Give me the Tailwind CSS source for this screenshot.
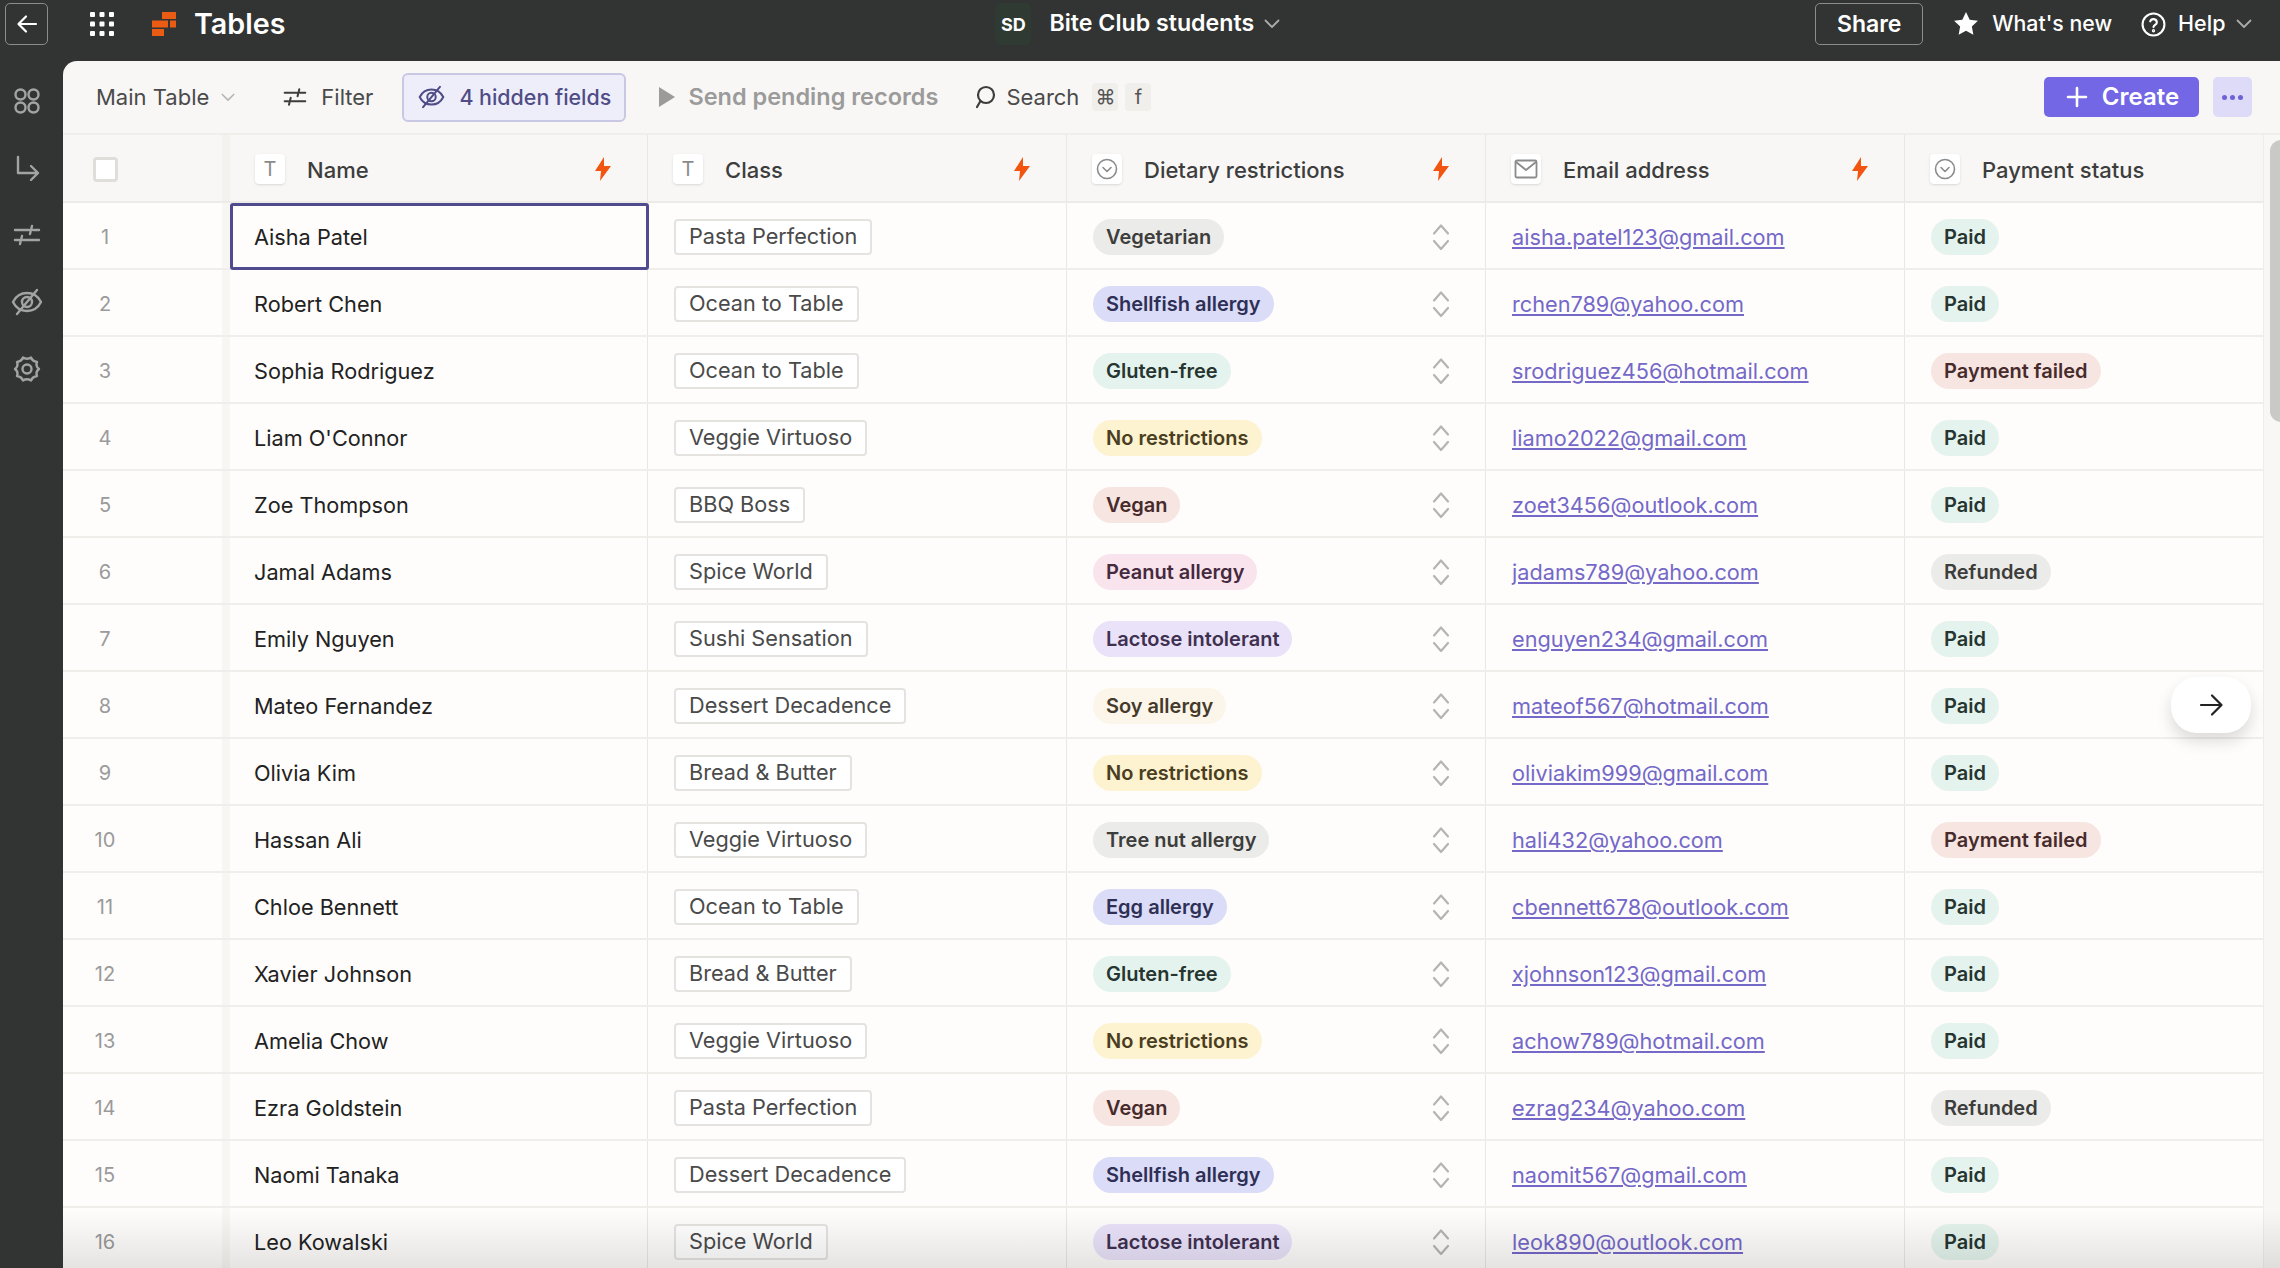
<!DOCTYPE html>
<html lang="en">
  <head>
    <meta charset="UTF-8" />
    <title>Tables</title>
    <script src="https://cdn.jsdelivr.net/npm/@tailwindcss/browser@4"></script>
  </head>
  <body class="h-screen overflow-hidden bg-[#323433] font-['Inter',sans-serif]">
    <!-- top bar -->
    <header class="flex h-[61px] items-center pb-[13px] text-white">
      <button class="ml-[5px] flex h-[42px] w-[43px] items-center justify-center rounded-[5px] border border-[#8c8c8c]">
        <svg width="24" height="24" viewBox="0 0 24 24" fill="none" stroke="currentColor" stroke-width="2.2" stroke-linecap="round" stroke-linejoin="round"><path d="M21 12H4M11 4.500 3.500 12l7.500 7.500"/></svg>
      </button>
      <svg class="ml-[42px]" width="24" height="24" viewBox="0 0 24 24" fill="#fff"><rect x="0" y="0" width="5" height="5" rx="1"/><rect x="9.500" y="0" width="5" height="5" rx="1"/><rect x="19" y="0" width="5" height="5" rx="1"/><rect x="0" y="9.500" width="5" height="5" rx="1"/><rect x="9.500" y="9.500" width="5" height="5" rx="1"/><rect x="19" y="9.500" width="5" height="5" rx="1"/><rect x="0" y="19" width="5" height="5" rx="1"/><rect x="9.500" y="19" width="5" height="5" rx="1"/><rect x="19" y="19" width="5" height="5" rx="1"/></svg>
      <svg class="ml-[38px]" width="24" height="24" viewBox="0 0 24 24" fill="#ea5b14"><path d="M10 0h14v7H10zM0 8.500h16v7H0zM18 8.500h6v7h-6zM0 17h12v7H0z"/></svg>
      <span class="ml-[18px] text-[28.7px] font-semibold leading-none">Tables</span>
      <span class="ml-[710px] flex h-[42px] w-[36px] items-center justify-center rounded-[5px] bg-[#2e3a32] text-[18px] font-bold">SD</span>
      <span class="ml-[18px] text-[23.2px] font-semibold leading-none">Bite Club students</span>
      <svg class="ml-[10px] text-[#aaa]" width="16" height="10" viewBox="0 0 16 10" fill="none" stroke="currentColor" stroke-width="1.800" stroke-linecap="round" stroke-linejoin="round"><path d="M1.500 1.500 8 8l6.500-6.500"/></svg>
      <button class="ml-[535px] flex h-[42px] w-[108px] items-center justify-center rounded-[5px] border border-[#8c8c8c] text-[23px] font-semibold">Share</button>
      <svg class="ml-[30px]" width="26" height="26" viewBox="0 0 24 24" fill="#fff"><path d="m12 1 3.400 7 7.600 1-5.600 5.300L18.800 22 12 18.300 5.200 22l1.400-7.700L1 9l7.600-1z"/></svg>
      <span class="ml-[13px] text-[21.3px] font-medium leading-none">What's new</span>
      <svg class="ml-[29px]" width="25" height="25" viewBox="0 0 24 24" fill="none" stroke="currentColor" stroke-width="2" stroke-linecap="round" stroke-linejoin="round"><circle cx="12" cy="12" r="10.500"/><path d="M8.800 9a3.300 3.300 0 0 1 6.400 1c0 2.200-3.200 2.600-3.200 4.500"/><circle cx="12" cy="18" r=".6"/></svg>
      <span class="ml-[12px] text-[21.5px] font-medium leading-none">Help</span>
      <svg class="ml-[11px] text-[#aaa]" width="16" height="10" viewBox="0 0 16 10" fill="none" stroke="currentColor" stroke-width="1.800" stroke-linecap="round" stroke-linejoin="round"><path d="M1.500 1.500 8 8l6.500-6.500"/></svg>
    </header>

    <div class="flex h-[1207px]">
      <!-- left rail -->
      <aside class="flex w-[63px] shrink-0 flex-col items-center gap-[39px] pt-[26px] pr-[9px] text-[#a3a3a3]">
        <svg width="28" height="28" viewBox="0 0 28 28" fill="none" stroke="currentColor" stroke-width="2.400"><circle cx="7.500" cy="7.500" r="5"/><circle cx="20.500" cy="7.500" r="5"/><circle cx="7.500" cy="20.500" r="5"/><circle cx="20.500" cy="20.500" r="5"/></svg>
        <svg width="28" height="28" viewBox="0 0 28 28" fill="none" stroke="currentColor" stroke-width="2.400" stroke-linecap="round" stroke-linejoin="round"><path d="M5 3v16h20M18 12l7 7-7 7"/></svg>
        <svg width="28" height="28" viewBox="0 0 28 28" fill="none" stroke="currentColor" stroke-width="2.400" stroke-linecap="round"><path d="M2 9h14M20 9h6M19 5l-2 8M2 19h4M10 19h16M9 15l-2 8"/></svg>
        <svg width="32" height="28" viewBox="0 0 32 28" fill="none" stroke="currentColor" stroke-width="2.400" stroke-linecap="round" stroke-linejoin="round"><path d="M2 14c3-6 8-9 14-9s11 3 14 9c-3 6-8 9-14 9S5 20 2 14z"/><circle cx="16" cy="14" r="5"/><path d="M26 2 6 26"/></svg>
        <svg width="30" height="28" viewBox="0 0 30 28" fill="none" stroke="currentColor" stroke-width="2.400" stroke-linejoin="round"><circle cx="15" cy="14" r="4.500"/><path d="M11 2.500c2.500 1.500 5.500 1.500 8 0 1 2.600 3.400 4 6 4.500-1 2.500-.6 5 2 7-2.600 2-3 4.500-2 7-2.600.5-5 1.900-6 4.500-2.500-1.500-5.500-1.500-8 0-1-2.600-3.400-4-6-4.500 1-2.500.6-5-2-7 2.600-2 3-4.500 2-7 2.600-.5 5-1.900 6-4.500z"/></svg>
      </aside>

      <main class="relative min-w-0 flex-1 overflow-hidden rounded-tl-[14px] bg-[#f8f7f5]">
        <!-- toolbar -->
        <div class="flex h-[74px] items-center border-b-2 border-[#efeeeb] text-[22px] text-[#4a4a4a]">
          <span class="ml-[33px]">Main Table</span>
          <svg class="ml-[12px] text-[#b5b5b5]" width="14" height="9" viewBox="0 0 16 10" fill="none" stroke="currentColor" stroke-width="1.800" stroke-linecap="round" stroke-linejoin="round"><path d="M1.500 1.500 8 8l6.500-6.500"/></svg>
          <svg class="ml-[48px]" width="24" height="24" viewBox="0 0 28 28" fill="none" stroke="#3d3d3d" stroke-width="2.400" stroke-linecap="round"><path d="M2 9h14M20 9h6M19 5l-2 8M2 19h4M10 19h16M9 15l-2 8"/></svg>
          <span class="ml-[14px]">Filter</span>
          <button class="ml-[29px] flex h-[49px] w-[224px] items-center rounded-[6px] border-2 border-[#c9c8e4] bg-[#eeeefb] text-[#4f4c86]">
            <svg class="ml-[14px]" width="27" height="24" viewBox="0 0 32 28" fill="none" stroke="currentColor" stroke-width="2.400" stroke-linecap="round" stroke-linejoin="round"><path d="M2 14c3-6 8-9 14-9s11 3 14 9c-3 6-8 9-14 9S5 20 2 14z"/><circle cx="16" cy="14" r="5"/><path d="M26 2 6 26"/></svg>
            <span class="ml-[14px] text-[21.4px] font-medium">4 hidden fields</span>
          </button>
          <svg class="ml-[32px]" width="18" height="22" viewBox="0 0 18 22" fill="#9b9b9b"><path d="M1 1 17 11 1 21z"/></svg>
          <span class="ml-[12px] text-[23.5px] font-semibold text-[#9b9b9b]">Send pending records</span>
          <svg class="ml-[36px]" width="22" height="24" viewBox="0 0 22 24" fill="none" stroke="#3d3d3d" stroke-width="2.200" stroke-linecap="round"><circle cx="12" cy="10" r="8"/><path d="M6.500 16 3 22"/></svg>
          <span class="ml-[10px]">Search</span>
          <span class="ml-[13px] flex h-[28px] w-[26px] items-center justify-center rounded-[4px] bg-[#f0efec] text-[20px] text-[#555]">⌘</span>
          <span class="ml-[7px] flex h-[28px] w-[26px] items-center justify-center rounded-[4px] bg-[#f0efec] text-[20px] text-[#555]">f</span>
          <button class="ml-auto flex h-[40px] w-[155px] items-center justify-center gap-[14px] rounded-[5px] bg-[#7467e6] pl-[2px] text-[24px] font-semibold text-white">
            <svg width="22" height="22" viewBox="0 0 22 22" fill="none" stroke="currentColor" stroke-width="2.600" stroke-linecap="round"><path d="M11 2v18M2 11h18"/></svg>
            Create
          </button>
          <button class="mr-[28px] ml-[14px] flex h-[40px] w-[39px] items-center justify-center gap-[3px] rounded-[5px] bg-[#dedbf8]">
            <i class="size-[5px] rounded-full bg-[#6d62d6]"></i><i class="size-[5px] rounded-full bg-[#6d62d6]"></i><i class="size-[5px] rounded-full bg-[#6d62d6]"></i>
          </button>
        </div>

        <div class="flex">
          <div class="w-[2200px] shrink-0">
            <!-- header row -->
            <div class="grid h-[68px] grid-cols-[167px_418px_419px_419px_419px_358px] border-b-2 border-[#ecebe8] text-[22px] text-[#3d3d3d]">
              <div class="flex items-center border-r-8 border-[#f3f2ef] pt-[2px]">
                <span class="ml-[30px] size-[25px] rounded-[4px] border-[3px] border-[#dfdedb] bg-white"></span>
              </div>
              <div class="flex items-center border-r border-[#e8e7e4] pt-[2px]">
                <span class="ml-[25px] flex h-[30px] w-[30px] items-center justify-center rounded-[4px] bg-white text-[20px] text-[#8b8b8b] shadow-sm">T</span>
                <span class="mt-[2px] ml-[22px] font-medium">Name</span>
                <svg class="mr-[35px] ml-auto" width="18" height="24" viewBox="0 0 18 24" fill="#f1550f"><path d="M10 0 1 14h6l-1 10 11-15h-7z"/></svg>
              </div>
              <div class="flex items-center border-r border-[#e8e7e4] pt-[2px]">
                <span class="ml-[25px] flex h-[30px] w-[30px] items-center justify-center rounded-[4px] bg-white text-[20px] text-[#8b8b8b] shadow-sm">T</span>
                <span class="mt-[2px] ml-[22px] font-medium">Class</span>
                <svg class="mr-[35px] ml-auto" width="18" height="24" viewBox="0 0 18 24" fill="#f1550f"><path d="M10 0 1 14h6l-1 10 11-15h-7z"/></svg>
              </div>
              <div class="flex items-center border-r border-[#e8e7e4] pt-[2px]">
                <span class="ml-[25px] flex h-[30px] w-[30px] items-center justify-center rounded-[4px] bg-white shadow-sm">
                  <svg width="22" height="22" viewBox="0 0 22 22" fill="none" stroke="#8b8b8b" stroke-width="1.600" stroke-linecap="round" stroke-linejoin="round"><circle cx="11" cy="11" r="9.500"/><path d="m7 9.500 4 4 4-4"/></svg>
                </span>
                <span class="mt-[2px] ml-[22px] font-medium">Dietary restrictions</span>
                <svg class="mr-[35px] ml-auto" width="18" height="24" viewBox="0 0 18 24" fill="#f1550f"><path d="M10 0 1 14h6l-1 10 11-15h-7z"/></svg>
              </div>
              <div class="flex items-center border-r border-[#e8e7e4] pt-[2px]">
                <span class="ml-[25px] flex h-[30px] w-[30px] items-center justify-center rounded-[4px] bg-white shadow-sm">
                  <svg width="24" height="20" viewBox="0 0 24 20" fill="none" stroke="#8b8b8b" stroke-width="1.800" stroke-linejoin="round"><rect x="1.500" y="1.500" width="21" height="17" rx="1.500"/><path d="m2 3 10 8 10-8"/></svg>
                </span>
                <span class="mt-[2px] ml-[22px] font-medium">Email address</span>
                <svg class="mr-[35px] ml-auto" width="18" height="24" viewBox="0 0 18 24" fill="#f1550f"><path d="M10 0 1 14h6l-1 10 11-15h-7z"/></svg>
              </div>
              <div class="flex items-center pt-[2px]">
                <span class="ml-[25px] flex h-[30px] w-[30px] items-center justify-center rounded-[4px] bg-white shadow-sm">
                  <svg width="22" height="22" viewBox="0 0 22 22" fill="none" stroke="#8b8b8b" stroke-width="1.600" stroke-linecap="round" stroke-linejoin="round"><circle cx="11" cy="11" r="9.500"/><path d="m7 9.500 4 4 4-4"/></svg>
                </span>
                <span class="mt-[2px] ml-[22px] font-medium">Payment status</span>
              </div>
            </div>
            <div id="rows"></div>
          </div>
          <!-- scrollbar -->
          <div class="h-[1133px] flex-1 border-l border-[#eeedea] bg-[#f8f7f5] pt-[5px] pl-[6px]">
            <div class="h-[282px] w-[11px] rounded-l-full bg-[#c9c9c7]"></div>
          </div>
        </div>

        <!-- scroll-right button -->
        <button class="absolute top-[616px] left-[2108px] flex h-[56px] w-[80px] items-center justify-center rounded-[26px] bg-white shadow-[0_8px_16px_rgba(0,0,0,0.14)]">
          <svg width="26" height="26" viewBox="0 0 26 26" fill="none" stroke="#222" stroke-width="2.200" stroke-linecap="round" stroke-linejoin="round"><path d="M3 13h20M14 3.500 23.500 13 14 22.500"/></svg>
        </button>
        <!-- fade at the bottom of the table -->
        <div class="pointer-events-none absolute right-0 bottom-0 left-0 h-[58px] bg-linear-to-t from-black/10 to-transparent"></div>
      </main>
    </div>

    <script>
      const tags = {
        gray: "bg-[#ebebe9] text-[#3d3d3b]",
        blue: "bg-[#dadcf8] text-[#2f2f55]",
        green: "bg-[#e4f3ed] text-[#26352f]",
        yellow: "bg-[#fdf3d0] text-[#4a3d20]",
        red: "bg-[#f7e5e2] text-[#472b2b]",
        pink: "bg-[#f9e4ee] text-[#45293d]",
        purple: "bg-[#e9e2f9] text-[#3f3050]",
        tan: "bg-[#fcf5ea] text-[#453a2a]",
      };
      const diet = {
        Vegetarian: "gray",
        "Shellfish allergy": "blue",
        "Gluten-free": "green",
        "No restrictions": "yellow",
        Vegan: "red",
        "Peanut allergy": "pink",
        "Lactose intolerant": "purple",
        "Soy allergy": "tan",
        "Tree nut allergy": "gray",
        "Egg allergy": "blue",
      };
      const status = { Paid: "green", "Payment failed": "red", Refunded: "gray" };
      const data = [
        ["Aisha Patel", "Pasta Perfection", "Vegetarian", "aisha.patel123@gmail.com", "Paid"],
        ["Robert Chen", "Ocean to Table", "Shellfish allergy", "rchen789@yahoo.com", "Paid"],
        ["Sophia Rodriguez", "Ocean to Table", "Gluten-free", "srodriguez456@hotmail.com", "Payment failed"],
        ["Liam O'Connor", "Veggie Virtuoso", "No restrictions", "liamo2022@gmail.com", "Paid"],
        ["Zoe Thompson", "BBQ Boss", "Vegan", "zoet3456@outlook.com", "Paid"],
        ["Jamal Adams", "Spice World", "Peanut allergy", "jadams789@yahoo.com", "Refunded"],
        ["Emily Nguyen", "Sushi Sensation", "Lactose intolerant", "enguyen234@gmail.com", "Paid"],
        ["Mateo Fernandez", "Dessert Decadence", "Soy allergy", "mateof567@hotmail.com", "Paid"],
        ["Olivia Kim", "Bread & Butter", "No restrictions", "oliviakim999@gmail.com", "Paid"],
        ["Hassan Ali", "Veggie Virtuoso", "Tree nut allergy", "hali432@yahoo.com", "Payment failed"],
        ["Chloe Bennett", "Ocean to Table", "Egg allergy", "cbennett678@outlook.com", "Paid"],
        ["Xavier Johnson", "Bread & Butter", "Gluten-free", "xjohnson123@gmail.com", "Paid"],
        ["Amelia Chow", "Veggie Virtuoso", "No restrictions", "achow789@hotmail.com", "Paid"],
        ["Ezra Goldstein", "Pasta Perfection", "Vegan", "ezrag234@yahoo.com", "Refunded"],
        ["Naomi Tanaka", "Dessert Decadence", "Shellfish allergy", "naomit567@gmail.com", "Paid"],
        ["Leo Kowalski", "Spice World", "Lactose intolerant", "leok890@outlook.com", "Paid"],
      ];
      const pill = "ml-[26px] flex h-[36px] items-center rounded-[18px] px-[13px] text-[20px] font-semibold";
      document.getElementById("rows").innerHTML = data
        .map(([name, cls, food, mail, paid], i) => `
          <div class="relative grid h-[67px] grid-cols-[167px_418px_419px_419px_419px_358px] border-b-2 border-[#efeeeb] bg-[#fefdfb] text-[21.7px]">
            <div class="flex items-center border-r-8 border-[#f7f6f3] pt-[2px] text-[20px] text-[#9a9a9a]"><span class="w-[84px] text-center">${i + 1}</span></div>
            <div class="flex items-center border-r border-[#e8e7e4] pt-[4px] pl-[24px] text-[#222]">${name}</div>
            <div class="flex items-center border-r border-[#e8e7e4] pt-[2px]">
              <span class="ml-[26px] flex h-[36px] items-center rounded-[4px] border-2 border-[#e4e3e0] bg-white px-[13px] text-[#4a4a4a]">${cls.replace("&", "&amp;")}</span>
            </div>
            <div class="flex items-center border-r border-[#e8e7e4] pt-[2px]">
              <span class="${pill} ${tags[diet[food]]}">${food}</span>
              <svg class="mr-[34px] ml-auto" width="20" height="28" viewBox="0 0 20 28" fill="none" stroke="#b4b4b2" stroke-width="2.200" stroke-linecap="round" stroke-linejoin="round"><path d="M3 10.500 10 2.500l7 8M3 18l7 8 7-8"/></svg>
            </div>
            <div class="flex items-center border-r border-[#e8e7e4] pt-[4px] pl-[26px]"><a class="text-[#7468c8] underline">${mail}</a></div>
            <div class="flex items-center pt-[2px]"><span class="${pill} ${tags[status[paid]]}">${paid}</span></div>
            ${i === 0 ? '<div class="absolute top-0 left-[167px] h-[67px] w-[419px] rounded-[3px] border-[3px] border-[#4f4b8e]"></div>' : ""}
          </div>`)
        .join("");
    </script>
  </body>
</html>
